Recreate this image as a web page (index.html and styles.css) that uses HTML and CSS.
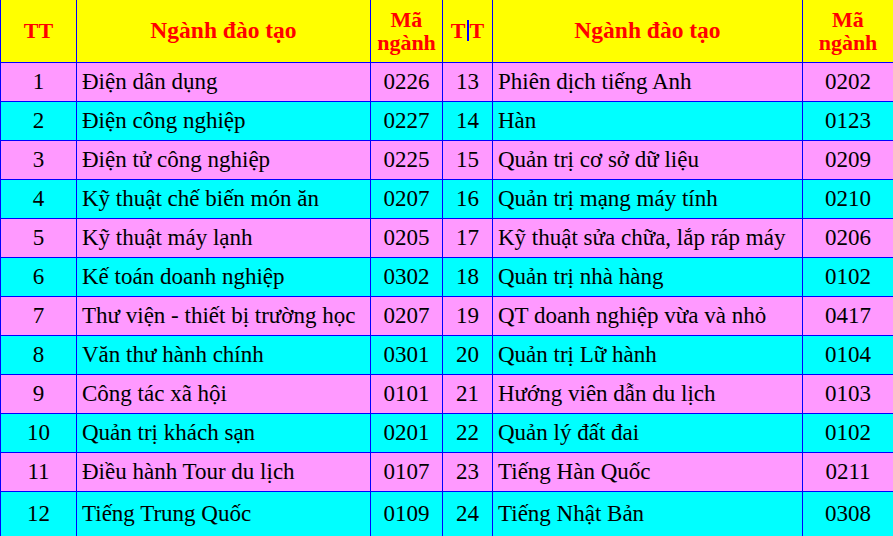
FILE: index.html
```html
<!DOCTYPE html>
<html lang="vi">
<head>
<meta charset="utf-8">
<link rel="stylesheet" href="styles.css">
</head>
<body>
<table class="grid">
  <colgroup>
    <col class="c1"><col class="c2"><col class="c3"><col class="c4"><col class="c5"><col class="c6">
  </colgroup>
  <thead>
    <tr class="head">
      <th>TT</th>
      <th class="wide">Ngành đào tạo</th>
      <th>Mã<br>ngành</th>
      <th>T<span class="caret"></span>T</th>
      <th class="wide">Ngành đào tạo</th>
      <th>Mã<br>ngành</th>
    </tr>
  </thead>
  <tbody>
    <tr class="pink"><td class="n">1</td><td>Điện dân dụng</td><td class="n">0226</td><td class="n">13</td><td>Phiên dịch tiếng Anh</td><td class="n">0202</td></tr>
    <tr class="cyan"><td class="n">2</td><td>Điện công nghiệp</td><td class="n">0227</td><td class="n">14</td><td>Hàn</td><td class="n">0123</td></tr>
    <tr class="pink"><td class="n">3</td><td>Điện tử công nghiệp</td><td class="n">0225</td><td class="n">15</td><td>Quản trị cơ sở dữ liệu</td><td class="n">0209</td></tr>
    <tr class="cyan"><td class="n">4</td><td>Kỹ thuật chế biến món ăn</td><td class="n">0207</td><td class="n">16</td><td>Quản trị mạng máy tính</td><td class="n">0210</td></tr>
    <tr class="pink"><td class="n">5</td><td>Kỹ thuật máy lạnh</td><td class="n">0205</td><td class="n">17</td><td>Kỹ thuật sửa chữa, lắp ráp máy</td><td class="n">0206</td></tr>
    <tr class="cyan"><td class="n">6</td><td>Kế toán doanh nghiệp</td><td class="n">0302</td><td class="n">18</td><td>Quản trị nhà hàng</td><td class="n">0102</td></tr>
    <tr class="pink"><td class="n">7</td><td>Thư viện - thiết bị trường học</td><td class="n">0207</td><td class="n">19</td><td>QT doanh nghiệp vừa và nhỏ</td><td class="n">0417</td></tr>
    <tr class="cyan"><td class="n">8</td><td>Văn thư hành chính</td><td class="n">0301</td><td class="n">20</td><td>Quản trị Lữ hành</td><td class="n">0104</td></tr>
    <tr class="pink"><td class="n">9</td><td>Công tác xã hội</td><td class="n">0101</td><td class="n">21</td><td>Hướng viên dẫn du lịch</td><td class="n">0103</td></tr>
    <tr class="cyan"><td class="n">10</td><td>Quản trị khách sạn</td><td class="n">0201</td><td class="n">22</td><td>Quản lý đất đai</td><td class="n">0102</td></tr>
    <tr class="pink"><td class="n">11</td><td>Điều hành Tour du lịch</td><td class="n">0107</td><td class="n">23</td><td>Tiếng Hàn Quốc</td><td class="n">0211</td></tr>
    <tr class="cyan last"><td class="n">12</td><td>Tiếng Trung Quốc</td><td class="n">0109</td><td class="n">24</td><td>Tiếng Nhật Bản</td><td class="n">0308</td></tr>
  </tbody>
</table>
</body>
</html>
```

FILE: styles.css
```css
html, body {
  margin: 0;
  padding: 0;
  background: #ffffff;
  overflow: hidden;
}
.grid {
  border-collapse: collapse;
  table-layout: fixed;
  width: 893px;
  font-family: "Liberation Serif", "Times New Roman", serif;
  font-size: 23px;
  color: #000000;
}
.c1 { width: 76px; }
.c2 { width: 294px; }
.c3 { width: 72px; }
.c4 { width: 50px; }
.c5 { width: 310px; }
.c6 { width: 91px; }
.grid th, .grid td {
  border: 1px solid #0000ff;
  padding: 0 0 0 5px;
  white-space: nowrap;
  overflow: hidden;
}
.grid th {
  border-top: none;
}
.head {
  background: #ffff00;
  height: 62px;
}
.head th {
  color: #ff0000;
  font-weight: bold;
  text-align: center;
  padding: 0;
  line-height: 23px;
  font-size: 22px;
}
.head th.wide {
  font-size: 23.5px;
}
.grid tbody tr {
  height: 39px;
}
.grid tbody tr.last {
  height: 46px;
}
.pink { background: #ff99ff; }
.cyan { background: #00ffff; }
.grid td.n {
  text-align: center;
  padding: 0;
}
.caret {
  display: inline-block;
  width: 2px;
  height: 21px;
  background: #0000ff;
  vertical-align: -3px;
  margin: 0 1px;
}
```
